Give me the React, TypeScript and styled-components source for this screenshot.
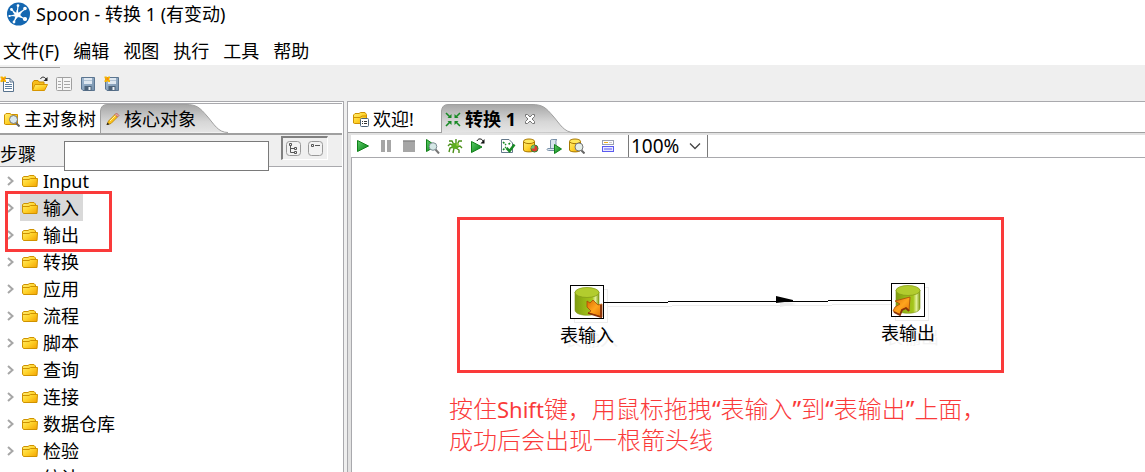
import React from 'react';
import styled, { createGlobalStyle, css } from 'styled-components';

const Global = createGlobalStyle`
  * { box-sizing: border-box; }
  html, body { margin: 0; }
  body, button, input, select {
    font-family: "Noto Sans", "Noto Sans CJK SC", sans-serif;
    font-size: 18px;
    font-weight: 400;
    line-height: 26px;
    color: #000;
  }
  button {
    border: 0;
    padding: 0;
    background: none;
    white-space: nowrap;
  }
  svg { display: block; flex: none; }
`;

const Window = styled.div`
  display: flex;
  flex-direction: column;
  height: 100vh;
  overflow: hidden;
  background: #fff;
`;

const TitleBar = styled.header`
  display: flex;
  align-items: center;
  gap: 6px;
  height: 28px;
  padding-left: 6px;
  flex: none;
`;

const Title = styled.h1`
  margin: 0;
  font-size: 18px;
  font-weight: 400;
  line-height: 26px;
`;

const MenuBar = styled.nav`
  display: flex;
  align-items: center;
  gap: 14px;
  flex: none;
  height: 37px;
  padding: 8px 0 0 3px;
`;

const MainToolbar = styled.div`
  display: flex;
  align-items: center;
  gap: 8px;
  flex: none;
  height: 36px;
  padding-top: 2px;
  background: #efefef;
  position: relative;
  &::before {
    content: "";
    position: absolute;
    left: 0;
    top: 2px;
    width: 60px;
    height: 1px;
    background: #a0a0a0;
  }
`;

const IconButton = styled.button<{ $after?: number }>`
  display: flex;
  align-items: center;
  justify-content: center;
  width: 16px;
  height: 16px;
  flex: none;
  margin-right: ${(p) => p.$after ?? 0}px;
`;

const Workspace = styled.main`
  display: flex;
  flex: 1;
  min-height: 0;
  gap: 3px;
  background: #efefef;
`;

const SidePanel = styled.aside`
  display: flex;
  flex-direction: column;
  flex: none;
  width: 344px;
  background: #fff;
  border-top: 1px solid #a9a9ad;
  border-right: 1px solid #a9a9ad;
  position: relative;
`;

const TabStrip = styled.div<{ $side?: boolean }>`
  display: flex;
  align-items: flex-end;
  flex: none;
  height: ${(p) => (p.$side ? 32 : 33)}px;
  ${(p) =>
    p.$side
      ? css`
          margin: 1px 1px 0 0;
          border-top: 1px solid #a9a9ad;
          border-bottom: 2px solid #a0a0a0;
        `
      : css`
          border-bottom: 2px solid #e2e2e2;
          box-shadow: inset 0 -1px 0 #a0a0a0;
        `}
`;

const Tab = styled.button<{ $width: number; $inset: number; $bold?: boolean }>`
  display: flex;
  align-items: center;
  gap: 4px;
  width: ${(p) => p.$width}px;
  height: 29px;
  padding-left: ${(p) => p.$inset}px;
  position: relative;
  flex: none;
  font-weight: ${(p) => (p.$bold ? 700 : 400)};
  & > span, & > svg { position: relative; }
`;

const TabBack = styled.svg`
  && {
    position: absolute;
    left: 0;
    bottom: 0;
  }
`;

const TabClose = styled.svg`
  margin-left: 4px;
`;

const SearchBar = styled.div`
  display: flex;
  align-items: flex-start;
  flex: none;
  height: 32px;
  background: #efefef;
  border-bottom: 1px solid #a9a9ad;
  margin-right: 1px;
`;

const StepLabel = styled.label`
  width: 64px;
  padding-top: 6px;
  flex: none;
`;

const SearchInput = styled.input`
  width: 205px;
  height: 30px;
  margin-top: 6px;
  padding: 0 4px;
  border: 1px solid #7a7a7a;
  background: #fff;
  position: relative;
  z-index: 1;
`;

const ViewButtons = styled.div`
  display: flex;
  align-items: center;
  gap: 6px;
  width: 47px;
  height: 24px;
  margin: 1px 0 0 12px;
  padding-left: 3px;
  border: 1px solid #fff;
  border-top: 2px solid #808080;
  border-left: 2px solid #808080;
`;

const Tree = styled.ul`
  list-style: none;
  margin: 0;
  padding: 0;
  flex: 1;
  min-height: 0;
  overflow: hidden;
`;

const TreeRow = styled.li`
  display: flex;
  align-items: center;
  gap: 6px;
  height: 27px;
  padding-left: 7px;
`;

const TreeItem = styled.button<{ $selected?: boolean }>`
  display: flex;
  align-items: center;
  gap: 5px;
  height: 27px;
  padding: 0 4px 0 2px;
  background: ${(p) => (p.$selected ? '#d9d9d9' : 'transparent')};
`;

const TreeMark = styled.div`
  position: absolute;
  left: 5px;
  top: 89px;
  width: 107px;
  height: 61px;
  border: 3px solid #fa3a3a;
  pointer-events: none;
`;

const Editor = styled.section`
  display: flex;
  flex-direction: column;
  flex: 1;
  min-width: 0;
  background: #fff;
  border-top: 1px solid #a9a9ad;
  border-left: 1px solid #a9a9ad;
`;

const EditorBody = styled.div`
  display: flex;
  flex-direction: column;
  flex: 1;
  min-height: 0;
  border-left: 3px solid #e2e2e2;
`;

const EditorToolbar = styled.div`
  display: flex;
  align-items: center;
  gap: 7px;
  flex: none;
  height: 23px;
  padding-left: 4px;
  border-bottom: 1px solid #a9a9ad;
`;

const ZoomBox = styled.div`
  display: flex;
  align-items: center;
  align-self: stretch;
  width: 80px;
  margin-left: 5px;
  border: solid #7a7a7a;
  border-width: 0 1px;
  position: relative;
`;

const ZoomSelect = styled.select`
  appearance: none;
  width: 100%;
  height: 22px;
  padding: 0 0 0 2px;
  border: 0;
  background: transparent;
  font-size: 19px;
  line-height: 22px;
`;

const ZoomArrow = styled.svg`
  position: absolute;
  right: 6px;
  top: 7px;
  pointer-events: none;
`;

const Canvas = styled.div`
  position: relative;
  flex: 1;
  min-height: 0;
  overflow: hidden;
  border-left: 1px solid #a9a9ad;
`;

const Hop = styled.svg`
  position: absolute;
  left: 252px;
  top: 132px;
`;

const Step = styled.figure<{ $x: number; $y: number }>`
  position: absolute;
  left: ${(p) => p.$x}px;
  top: ${(p) => p.$y}px;
  width: 56px;
  margin: 0;
  display: flex;
  flex-direction: column;
  align-items: center;
  gap: 3px;
`;

const StepBox = styled.div`
  width: 34px;
  height: 34px;
  border: 1px solid #000;
  background: #fff;
  box-shadow: 4px 4px 0 -1px #fff, 4px 4px 0 0 #ededed;
`;

const StepName = styled.figcaption`
  white-space: nowrap;
  text-shadow: 4px 4px 0 #f3f3f3;
`;

const Highlight = styled.div`
  position: absolute;
  left: 105px;
  top: 59px;
  width: 547px;
  height: 156px;
  border: 3px solid #fa3a3a;
  pointer-events: none;
`;

const Note = styled.p`
  position: absolute;
  left: 97px;
  top: 235px;
  margin: 0;
  font-size: 24px;
  font-weight: 300;
  line-height: 31px;
  color: #fa3a3a;
  white-space: nowrap;
`;

const Latin = styled.span<{ $quote?: boolean }>`
  font-family: "Noto Sans", sans-serif;
  font-size: ${(p) => (p.$quote ? 24 : 22)}px;
  font-weight: 400;
  line-height: 1;
`;

const Gradients = () => (
  <svg width="0" height="0" style={{ position: 'absolute' }} aria-hidden="true">
    <defs>
      <linearGradient id="gold" x1="0" y1="0" x2="1" y2="1">
        <stop offset="0" stopColor="#fff07a" />
        <stop offset="0.5" stopColor="#ffd42c" />
        <stop offset="1" stopColor="#f3a200" />
      </linearGradient>
      <linearGradient id="green" x1="0" y1="0" x2="1" y2="1">
        <stop offset="0" stopColor="#5fce6a" />
        <stop offset="1" stopColor="#007a10" />
      </linearGradient>
      <linearGradient id="steel" x1="0" y1="0" x2="1" y2="1">
        <stop offset="0" stopColor="#a4bcd4" />
        <stop offset="1" stopColor="#7590aa" />
      </linearGradient>
      <linearGradient id="tabFill" x1="0" y1="0" x2="0" y2="1">
        <stop offset="0" stopColor="#a6a6a6" />
        <stop offset="0.6" stopColor="#d6d6d6" />
        <stop offset="1" stopColor="#e6e6e6" />
      </linearGradient>
      <linearGradient id="lime" x1="0" y1="0" x2="1" y2="0">
        <stop offset="0" stopColor="#7f9c10" />
        <stop offset="0.35" stopColor="#94b416" />
        <stop offset="0.72" stopColor="#a5c51c" />
        <stop offset="0.85" stopColor="#e2f09a" />
        <stop offset="1" stopColor="#7d9a10" />
      </linearGradient>
      <linearGradient id="flame" x1="0" y1="0" x2="1" y2="1">
        <stop offset="0" stopColor="#d86a00" />
        <stop offset="0.5" stopColor="#ffa51e" />
        <stop offset="1" stopColor="#e06a00" />
      </linearGradient>
    </defs>
  </svg>
);

const Logo = () => (
  <svg width="24" height="24" viewBox="0 0 24 24">
    <circle cx="12.500" cy="12" r="11.500" fill="#1467b1" />
    <g stroke="#fff" strokeWidth="1.200" fill="#fff">
      <path d="M11 13 6 8M11 13 12 4M11 13 19 7M11 13 3 14M11 13 19 17M11 13 8 20" fill="none" />
      <path d="M7 10 10.500 11 11 8 12.500 11 16 9 14 13 16 15.500 12 14.800 9 18 9.500 14.500 6 13.500 9 12.500Z" strokeWidth=".5" />
      <circle cx="19" cy="6.500" r="1.200" />
      <circle cx="19" cy="17" r="1.500" />
      <circle cx="5.500" cy="7.500" r=".8" />
      <circle cx="3.500" cy="14" r=".5" />
      <circle cx="12" cy="3.600" r=".8" />
      <circle cx="8" cy="20" r=".8" />
    </g>
  </svg>
);

const I = ({ children }: { children: React.ReactNode }) => (
  <svg width="16" height="16" viewBox="0 0 16 16">{children}</svg>
);

const Spark = () => (
  <g>
    <path d="M.5 .5H2.500L3.500 1.500 4.500 .5H6V2L5 3 6 4.500V6H4.500L3.500 5 2.500 6H.5V4.500L1.500 3 .5 2Z" fill="#f6b400" />
    <rect x="2.500" y="2" width="2" height="2" fill="#ff8a00" />
  </g>
);

const NewIcon = () => (
  <I>
    <path d="M3.500 2.500H10L13.500 6V15.500H3.500Z" fill="#fff" stroke="#58738e" />
    <path d="M10 2.500V6H13.500" fill="none" stroke="#58738e" />
    <path d="M6 6.500H9M5 8.500H12M5 10.500H12M5 12.500H12" stroke="#5c7ea0" />
    <Spark />
  </I>
);
const OpenIcon = () => (
  <I>
    <path d="M.5 14V6.500L2 4.500H6L7 6H12V9" fill="#f7bd1a" stroke="#c98c00" />
    <path d="M3 8.500H15.500L12.500 14.500H.5Z" fill="url(#gold)" stroke="#d79600" />
    <path d="M8.500 3C9.500 .5 12.500 .5 14 3" fill="none" stroke="#222" />
    <path d="M15.500 1V5H11.500Z" fill="#222" />
  </I>
);
const ListIcon = () => (
  <I>
    <rect x=".5" y="1.500" width="15" height="13" rx="1" fill="#f6f6f6" stroke="#a0a0a0" />
    <path d="M6.500 2V14M8 5.500H14M8 8.500H14M8 11.500H14M2 5.500H5M2 8.500H5M2 11.500H5" stroke="#a8a8a8" />
  </I>
);
const Disk = () => (
  <>
    <path d="M1.500 1.500H14.500V14.500H3L1.500 13Z" fill="url(#steel)" stroke="#5b7590" />
    <rect x="4" y="2" width="8" height="6" fill="#dfe8f1" />
    <path d="M4 4.500H12" stroke="#b4c5d5" />
    <rect x="4.500" y="10" width="7" height="4.500" fill="#4d6379" />
    <rect x="8.500" y="11" width="2" height="3" fill="#eef3f8" />
  </>
);
const SaveIcon = () => (<I><Disk /></I>);
const SaveAsIcon = () => (<I><Disk /><Spark /></I>);

const FolderIcon = () => (
  <I>
    <path d="M.5 12V4.500L2 3.500H6L7.500 2.500H12L13.500 4V5.500H15.500L15 13.500H1.500Z" fill="url(#gold)" stroke="#cf9200" />
    <path d="M1 6.500H7L8.500 5.500H14.500" fill="none" stroke="#cf9200" />
  </I>
);
const TreeSearchIcon = () => (
  <I>
    <path d="M.5 13V4L2 2.500H6L7.500 3.500H13.500V13.500H1.500Z" fill="url(#gold)" stroke="#cf9200" />
    <path d="M12 12 15.500 15.500" stroke="#666" strokeWidth="2" />
    <circle cx="9.500" cy="8.500" r="4" fill="#d8e8ef" stroke="#777" />
  </I>
);
const WelcomeIcon = () => (
  <I>
    <path d="M.5 12V4L2 2.500H6L7.500 1.500H12L13.500 3.500V12.500H1.500Z" fill="url(#gold)" stroke="#cf9200" />
    <path d="M1 6.500H7L9 5H13" fill="none" stroke="#cf9200" />
    <rect x="7.500" y="7.500" width="8" height="8" rx="1" fill="#fff" stroke="#4d6378" />
    <path d="M9 10.500H10M11 10.500H14M9 12.500H10M11 12.500H14" stroke="#333" />
  </I>
);
const PencilIcon = () => (
  <svg width="14" height="14" viewBox="0 0 14 14">
    <path d="M1 12.500 2.500 9 9 2.500 11.500 5 5 11.500Z" fill="#fcc21c" stroke="#b98200" strokeWidth=".8" />
    <path d="M9 2.500 10.500 1 13 3.500 11.500 5Z" fill="#e9a09a" stroke="#b0625c" strokeWidth=".8" />
    <path d="M.5 13 1.500 10.500 3.500 12.500Z" fill="#222" />
    <path d="M4 9 9.500 3.500" stroke="#fff3a0" />
  </svg>
);
const TransIcon = () => (
  <I>
    <g stroke="#178a24" strokeWidth="1.600" fill="#178a24">
      <path d="M1 2 5 6M15 2 11 6M1 15 5 11M15 15 11 11" />
      <path d="M6.500 3V7H2.500ZM9.500 3V7H13.500ZM6.500 14V10H2.500ZM9.500 14V10H13.500Z" stroke="none" />
    </g>
  </I>
);
const CloseIcon = () => (
  <TabClose width="12" height="12" viewBox="0 0 12 12">
    <path d="M1.500 1.500H3.500L6 4 8.500 1.500H10.500V3.500L8 6 10.500 8.500V10.500H8.500L6 8 3.500 10.500H1.500V8.500L4 6 1.500 3.500Z" fill="#fff" stroke="#777" />
  </TabClose>
);
const Play = () => <path d="M2.500 2.500 13.500 8 2.500 13.500Z" fill="url(#green)" stroke="#108018" />;
const Lens = () => (
  <>
    <path d="M11.500 11.500 15 15.500" stroke="#777" strokeWidth="2" />
    <circle cx="9" cy="8.500" r="3.800" fill="#d5e8e6" stroke="#7b8c92" />
  </>
);
const Drum = () => (
  <>
    <path d="M.5 3.500V12C.5 14.500 11.500 14.500 11.500 12V3.500" fill="url(#gold)" stroke="#a87800" />
    <ellipse cx="6" cy="3.300" rx="5.500" ry="2.300" fill="#ffe95d" stroke="#a87800" />
  </>
);
const toolIcons: { name: string; after?: number; icon: React.ReactNode }[] = [
  { name: '运行', icon: <I><Play /></I> },
  { name: '暂停', icon: <I><path d="M3 2H7V14H3ZM9 2H13V14H9Z" fill="#a6a6a6" /></I> },
  { name: '停止', icon: <I><path d="M2 2H14V14H2Z" fill="#a6a6a6" /><path d="M2 3.500H14" stroke="#8f8f8f" /></I> },
  { name: '预览', icon: <I><path d="M2.500 1.500 12 8 2.500 13.500Z" fill="url(#green)" stroke="#108018" /><Lens /></I> },
  {
    name: '调试',
    icon: (
      <I>
        <path d="M7 7 5 3 2 3M9 6 9 1M10 7 12 3 15 3M10 9 13 8 15 10M9 10 12 12 12 15M7 10 6 15M6 9 3 10 2 14M6 7 3 6 1 8" fill="none" stroke="#4a8f18" strokeWidth="1.400" />
        <ellipse cx="8" cy="8" rx="3.600" ry="3" fill="#5eae22" />
        <circle cx="10.500" cy="6.500" r="1.500" fill="#8fc83c" />
      </I>
    ),
  },
  {
    name: '重放',
    after: 7,
    icon: (
      <I>
        <path d="M1.500 3.500 12 9 1.500 14.500Z" fill="url(#green)" stroke="#108018" />
        <path d="M7 3C8 0 12 .5 13 3" fill="none" stroke="#111" />
        <path d="M14.500 1V5.500H10.500Z" fill="#111" />
      </I>
    ),
  },
  {
    name: '校验',
    icon: (
      <I>
        <path d="M1.500 1.500H9L12.500 5V14.500H1.500Z" fill="#fff" stroke="#63788a" />
        <path d="M3 4 6 7M10 5 8 7M3 12 6 9" stroke="#178a24" strokeWidth="1.600" strokeDasharray="2 1" />
        <path d="M6.500 10 9.500 13 14.500 6.500" fill="none" stroke="#178a24" strokeWidth="2.500" />
      </I>
    ),
  },
  {
    name: '影响',
    icon: (
      <I>
        <Drum />
        <circle cx="11.500" cy="10.500" r="3.500" fill="#e23c2e" stroke="#2b8a35" />
        <path d="M11.500 10.500V7A3.500 3.500 0 0 0 8 10.500Z" fill="#6fc46d" />
      </I>
    ),
  },
  {
    name: 'SQL',
    icon: (
      <I>
        <path d="M4.500 11V3C4.500 1 6 1.500 7 1.500H11C9.500 2 10 4 10 5V12.500H2.500C.5 12.500 1 10.500 2 10.500H8" fill="#d9e4ee" stroke="#7890a8" />
        <path d="M8.500 6.500 15.500 11 8.500 15.500Z" fill="url(#green)" stroke="#108018" />
      </I>
    ),
  },
  { name: '浏览', after: 8, icon: <I><Drum /><path d="M12 12 15.500 15.500" stroke="#666" strokeWidth="2" /><circle cx="10" cy="9" r="4" fill="#e4eee8" stroke="#777" /></I> },
  {
    name: '结果',
    icon: (
      <I>
        <rect x="2.500" y="2.500" width="11" height="4" fill="#fff" stroke="#9aa0b0" />
        <path d="M4 4.500H8" stroke="#f2b21a" />
        <path d="M9 4.500H12" stroke="#ccc" />
        <rect x="2.500" y="8.500" width="11" height="5" fill="#e9e9ff" stroke="#5a5af0" />
        <path d="M4 11H12" stroke="#5a5af0" />
      </I>
    ),
  },
];

const SelectedTabBack = ({ w }: { w: number }) => (
  <TabBack width={w} height="29" viewBox={`0 0 ${w} 29`} aria-hidden="true">
    <path
      d={`M.5 29V7Q1 .5 7 .5H${w - 42}C${w - 31} .5 ${w - 28} 4 ${w - 21} 12S${w - 10} 28.500 ${w} 28.500`}
      fill="url(#tabFill)"
      stroke="#a0a0a0"
    />
  </TabBack>
);

const ExpandIcon = () => (
  <svg width="7" height="10" viewBox="0 0 7 10">
    <path d="M1 1 5.500 5 1 9" fill="none" stroke="#a6a6a6" strokeWidth="2" />
  </svg>
);

const TreeViewIcon = ({ collapse }: { collapse?: boolean }) => (
  <I>
    <rect x=".5" y=".5" width="14" height="14" rx="3" fill="#f2f2f2" stroke="#999" />
    {collapse ? (
      <path d="M3.500 3.500H5.500V5.500H3.500ZM7 4.500H12" fill="none" stroke="#555" />
    ) : (
      <path d="M3.500 2.500H5.500V4.500H3.500ZM4.500 5V11.500H8M4.500 7.500H8M8.500 6.500H10.500V8.500H8.500ZM8.500 10.500H10.500V12.500H8.500Z" fill="none" stroke="#555" />
    )}
  </I>
);

const Cylinder = ({ x }: { x: number }) => (
  <g transform={`translate(${x} 0)`}>
    <path d="M0 6V24C0 31 24 31 24 24V6Z" fill="url(#lime)" stroke="#7d9416" strokeWidth=".6" />
    <ellipse cx="12" cy="6.500" rx="12" ry="5" fill="#b2cc2e" stroke="#869d18" strokeWidth=".8" />
  </g>
);
const TableInputIcon = () => (
  <svg width="32" height="32" viewBox="0 0 32 32">
    <Cylinder x={4} />
    <path d="M16 15 19 17 22 14 27 19 31 18V31L17 27 20 25 16 21Z" fill="url(#flame)" stroke="#a84a0a" strokeWidth=".8" />
    <path d="M17 27 30 31V19" fill="none" stroke="#8a3208" strokeWidth="1.800" />
  </svg>
);
const TableOutputIcon = () => (
  <svg width="32" height="32" viewBox="0 0 32 32">
    <Cylinder x={4} />
    <path d="M3 17 18 13 17 27 14 24 10 26 8 31 1 27 3 23 8 20Z" fill="url(#flame)" stroke="#a84a0a" strokeWidth=".8" />
    <path d="M17 27 14 24 10 26 8 31 2 28" fill="none" stroke="#8a3208" strokeWidth="1.800" />
  </svg>
);

const menus = ['文件(F)', '编辑', '视图', '执行', '工具', '帮助'];
const categories = ['Input', '输入', '输出', '转换', '应用', '流程', '脚本', '查询', '连接', '数据仓库', '检验', '统计'];

export default function App() {
  return (
    <Window>
      <Global />
      <Gradients />
      <TitleBar>
        <Logo />
        <Title>Spoon - 转换 1 (有变动)</Title>
      </TitleBar>
      <MenuBar>
        {menus.map((m) => (
          <button key={m}>{m}</button>
        ))}
      </MenuBar>
      <MainToolbar>
        <IconButton aria-label="新建" $after={8}><NewIcon /></IconButton>
        <IconButton aria-label="打开"><OpenIcon /></IconButton>
        <IconButton aria-label="浏览资源库"><ListIcon /></IconButton>
        <IconButton aria-label="保存"><SaveIcon /></IconButton>
        <IconButton aria-label="另存为"><SaveAsIcon /></IconButton>
      </MainToolbar>
      <Workspace>
        <SidePanel>
          <TabStrip $side>
            <Tab $width={100} $inset={4}><TreeSearchIcon /><span>主对象树</span></Tab>
            <Tab $width={128} $inset={6}>
              <SelectedTabBack w={128} /><PencilIcon /><span>核心对象</span>
            </Tab>
          </TabStrip>
          <SearchBar>
            <StepLabel htmlFor="step-search">步骤</StepLabel>
            <SearchInput id="step-search" />
            <ViewButtons>
              <IconButton aria-label="展开全部"><TreeViewIcon /></IconButton>
              <IconButton aria-label="收起全部"><TreeViewIcon collapse /></IconButton>
            </ViewButtons>
          </SearchBar>
          <Tree>
            {categories.map((c) => (
              <TreeRow key={c}>
                <ExpandIcon />
                <TreeItem $selected={c === '输入'}><FolderIcon />{c}</TreeItem>
              </TreeRow>
            ))}
          </Tree>
          <TreeMark />
        </SidePanel>
        <Editor>
          <TabStrip>
            <Tab $width={93} $inset={5}><WelcomeIcon /><span>欢迎!</span></Tab>
            <Tab $width={133} $inset={4} $bold>
              <SelectedTabBack w={133} /><TransIcon /><span>转换 1</span><CloseIcon />
            </Tab>
          </TabStrip>
          <EditorBody>
            <EditorToolbar>
              {toolIcons.map((t) => (
                <IconButton key={t.name} aria-label={t.name} $after={t.after}>{t.icon}</IconButton>
              ))}
              <ZoomBox>
                <ZoomSelect aria-label="缩放" defaultValue="100%">
                  <option>100%</option>
                </ZoomSelect>
                <ZoomArrow width="12" height="8" viewBox="0 0 12 8">
                  <path d="M1 1.500 6 6.500 11 1.500" fill="none" stroke="#444" strokeWidth="1.300" />
                </ZoomArrow>
              </ZoomBox>
            </EditorToolbar>
            <Canvas>
              <Step $x={207} $y={127}>
                <StepBox><TableInputIcon /></StepBox>
                <StepName>表输入</StepName>
              </Step>
              <Step $x={528} $y={125}>
                <StepBox><TableOutputIcon /></StepBox>
                <StepName>表输出</StepName>
              </Step>
              <Hop width="288" height="20" viewBox="0 0 288 20">
                <g fill="#ededed" stroke="#ededed">
                  <path d="M4 16.500H68M68 15.500H228M228 14.500H287" />
                  <path d="M176 10 192 14 176 17Z" stroke="none" />
                </g>
                <path d="M0 12.500H64M64 11.500H224M224 10.500H287" stroke="#000" />
                <path d="M172 6 189 10V11L172 13Z" />
              </Hop>
              <Highlight />
              <Note>
                按住<Latin>Shift</Latin>键，用鼠标拖拽<Latin $quote>“</Latin>表输入<Latin $quote>”</Latin>到
                <Latin $quote>“</Latin>表输出<Latin $quote>”</Latin>上面，
                <br />
                成功后会出现一根箭头线
              </Note>
            </Canvas>
          </EditorBody>
        </Editor>
      </Workspace>
    </Window>
  );
}
